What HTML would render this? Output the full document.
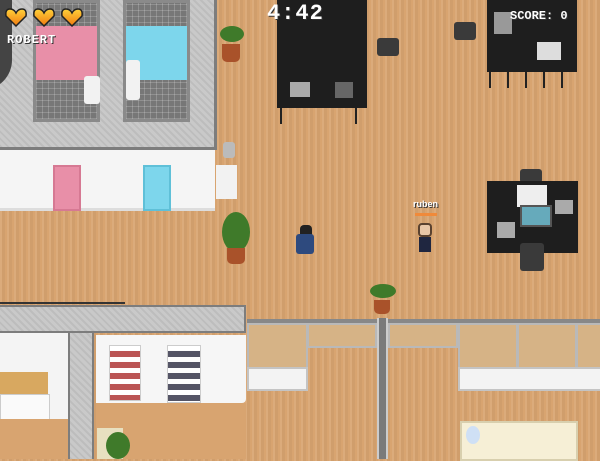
<!DOCTYPE html><html><head><style>
body{margin:0;width:600px;height:459px;overflow:hidden;position:relative;font-family:"Liberation Mono",monospace;
background:#d8a470;background-image:repeating-linear-gradient(90deg,rgba(255,255,255,.08) 0 2px,rgba(0,0,0,.04) 2px 5px,rgba(255,255,255,0) 5px 7px);}
div{position:absolute;box-sizing:border-box}
.gray{background:#c9c9c9;background-image:repeating-linear-gradient(45deg,rgba(0,0,0,.06) 0 2px,transparent 2px 5px)}
.tile{background:#777;background-image:repeating-linear-gradient(90deg,rgba(255,255,255,.18) 0 1px,transparent 1px 6px),repeating-linear-gradient(0deg,rgba(255,255,255,.18) 0 1px,transparent 1px 6px);border:3px solid #8a8a8a}
.desk{background:#1e1e1e}
.chair{background:#3a3a3a;border-radius:3px}
.pot{background:#a9522a;border-radius:0 0 5px 5px}
.leaf{background:#3f7a2a;border-radius:50%}
.glass{background:#d6b386;border:2px solid #b9b9b9}
.wht{background:#f3f3f3;border:2px solid #c4c4c4}
.txt{color:#fff;font-weight:bold;text-shadow:1px 1px 0 #333;white-space:nowrap}
</style></head><body>
<div class="gray" style="left:0;top:0;width:217px;height:150px;border-right:3px solid #7d7d7d;border-bottom:3px solid #7d7d7d"></div>
<div style="left:-20px;top:0;width:32px;height:90px;border-radius:0 0 30px 0;background:#444"></div>
<div class="tile" style="left:33px;top:0;width:67px;height:122px"></div>
<div style="left:36px;top:26px;width:61px;height:54px;background:#e88fa8"></div>
<div class="tile" style="left:123px;top:0;width:67px;height:122px"></div>
<div style="left:126px;top:26px;width:61px;height:54px;background:#7dd6ec"></div>
<div style="left:84px;top:76px;width:16px;height:28px;background:#f2f2f2;border-radius:3px"></div>
<div style="left:126px;top:60px;width:14px;height:40px;background:#f2f2f2;border-radius:3px"></div>
<div style="left:0;top:150px;width:215px;height:61px;background:#f5f5f5;border-bottom:3px solid #ddd"></div>
<div style="left:53px;top:165px;width:28px;height:46px;background:#e88fa8;border:2px solid #d67993"></div>
<div style="left:143px;top:165px;width:28px;height:46px;background:#7dd6ec;border:2px solid #5fc0d8"></div>
<div style="left:216px;top:165px;width:21px;height:34px;background:#f2f2f2"></div>
<div style="left:223px;top:142px;width:12px;height:16px;background:#bbb;border-radius:3px"></div>
<div class="desk" style="left:277px;top:0;width:90px;height:108px"></div>
<div style="left:290px;top:82px;width:20px;height:15px;background:#aaa"></div>
<div style="left:335px;top:82px;width:18px;height:16px;background:#666"></div>
<div style="left:280px;top:108px;width:10px;height:16px;border-left:2px solid #222"></div>
<div style="left:355px;top:108px;width:10px;height:16px;border-left:2px solid #222"></div>
<div class="desk" style="left:487px;top:0;width:90px;height:72px"></div>
<div style="left:494px;top:12px;width:18px;height:22px;background:#999"></div>
<div style="left:537px;top:42px;width:24px;height:18px;background:#ddd"></div>
<div style="left:489px;top:72px;width:86px;height:16px;background:repeating-linear-gradient(90deg,#222 0 2px,transparent 2px 18px)"></div>
<div class="chair" style="left:377px;top:38px;width:22px;height:18px"></div>
<div class="chair" style="left:454px;top:22px;width:22px;height:18px"></div>
<div class="chair" style="left:520px;top:169px;width:22px;height:14px"></div>
<div class="desk" style="left:487px;top:181px;width:91px;height:72px"></div>
<div style="left:517px;top:185px;width:30px;height:22px;background:#eee"></div>
<div style="left:520px;top:205px;width:32px;height:22px;background:#6ab;border:2px solid #555"></div>
<div style="left:497px;top:222px;width:18px;height:16px;background:#aaa"></div>
<div style="left:555px;top:200px;width:18px;height:14px;background:#aaa"></div>
<div class="chair" style="left:520px;top:243px;width:24px;height:28px"></div>
<div class="leaf" style="left:220px;top:26px;width:24px;height:16px"></div><div class="pot" style="left:222px;top:44px;width:18px;height:18px"></div>
<div class="leaf" style="left:222px;top:212px;width:28px;height:40px"></div><div class="pot" style="left:227px;top:248px;width:18px;height:16px"></div>
<div class="leaf" style="left:370px;top:284px;width:26px;height:14px"></div><div class="pot" style="left:374px;top:300px;width:16px;height:14px"></div>
<div style="left:300px;top:225px;width:12px;height:10px;background:#222;border-radius:4px 4px 0 0"></div>
<div style="left:296px;top:234px;width:18px;height:20px;background:#2e4a7e;border-radius:3px"></div>
<div style="left:418px;top:223px;width:14px;height:14px;background:#e8c7a8;border:2px solid #5a4230;border-radius:4px"></div>
<div style="left:419px;top:237px;width:12px;height:15px;background:#1f2640"></div>
<div class="txt" style="left:413px;top:199px;font-size:9px;font-family:'Liberation Sans',sans-serif">ruben</div>
<div style="left:415px;top:213px;width:22px;height:3px;background:#f08a3a"></div>
<div style="left:0;top:302px;width:125px;height:2px;background:#333"></div>
<div class="gray" style="left:0;top:305px;width:246px;height:28px;border:2px solid #7d7d7d;border-left:none"></div>
<div style="left:0;top:333px;width:68px;height:126px;background:#f4f4f4"></div>
<div style="left:0;top:372px;width:48px;height:22px;background:#d8a860"></div>
<div style="left:0;top:394px;width:50px;height:28px;background:#fafafa;border:1px solid #ccc"></div>
<div style="left:0;top:419px;width:68px;height:40px;background:#d8a470"></div>
<div class="gray" style="left:68px;top:333px;width:26px;height:126px;border-left:2px solid #7d7d7d;border-right:2px solid #7d7d7d"></div>
<div style="left:96px;top:335px;width:150px;height:68px;background:#f6f6f6;border-radius:0 0 4px 0"></div>
<div style="left:96px;top:403px;width:150px;height:56px;background:#d8a470"></div>
<div style="left:109px;top:345px;width:32px;height:56px;background:#fff;border:1px solid #ccc;background-image:repeating-linear-gradient(180deg,#fff 0 5px,#b55 5px 11px)"></div>
<div style="left:167px;top:345px;width:34px;height:58px;background:#fff;border:1px solid #ccc;background-image:repeating-linear-gradient(180deg,#fff 0 5px,#556 5px 11px)"></div>
<div style="left:97px;top:428px;width:26px;height:31px;background:#e8e0c0"></div>
<div class="leaf" style="left:106px;top:432px;width:24px;height:27px"></div>
<div style="left:247px;top:319px;width:353px;height:4px;background:#888"></div>
<div class="glass" style="left:247px;top:323px;width:61px;height:46px"></div>
<div class="wht" style="left:247px;top:367px;width:61px;height:24px"></div>
<div class="glass" style="left:307px;top:323px;width:70px;height:25px"></div>
<div style="left:377px;top:318px;width:11px;height:141px;background:#7a7a7a;border-left:2px solid #ccc;border-right:2px solid #ccc"></div>
<div class="glass" style="left:388px;top:323px;width:70px;height:25px"></div>
<div class="glass" style="left:458px;top:323px;width:60px;height:46px"></div>
<div class="glass" style="left:517px;top:323px;width:60px;height:46px"></div>
<div class="glass" style="left:576px;top:323px;width:30px;height:46px"></div>
<div class="wht" style="left:458px;top:367px;width:145px;height:24px"></div>
<div style="left:460px;top:421px;width:118px;height:40px;background:#f6efd6;border:2px solid #d8cfae"></div>
<div style="left:466px;top:426px;width:14px;height:18px;background:#cfe0f5;border-radius:50%"></div>
<svg style="position:absolute;left:4px;top:7px" width="84" height="20" viewBox="0 0 84 20">
<defs><linearGradient id="h" x1="0" y1="0" x2="0" y2="1"><stop offset="0" stop-color="#ffd23a"/><stop offset="1" stop-color="#f07a10"/></linearGradient></defs>
<g fill="url(#h)" stroke="#222" stroke-width="1.5">
<path d="M12 19 L2 9 Q1 2 6 2 Q10 2 12 6 Q14 2 18 2 Q23 2 22 9 Z"/>
<path transform="translate(28 0)" d="M12 19 L2 9 Q1 2 6 2 Q10 2 12 6 Q14 2 18 2 Q23 2 22 9 Z"/>
<path transform="translate(56 0)" d="M12 19 L2 9 Q1 2 6 2 Q10 2 12 6 Q14 2 18 2 Q23 2 22 9 Z"/>
</g></svg>
<div class="txt" style="left:7px;top:33px;font-size:12px;letter-spacing:1px">ROBERT</div>
<div class="txt" style="left:267px;top:1px;font-size:22px;letter-spacing:1px">4:42</div>
<div class="txt" style="left:510px;top:9px;font-size:12px">SCORE: 0</div>
</body></html>
